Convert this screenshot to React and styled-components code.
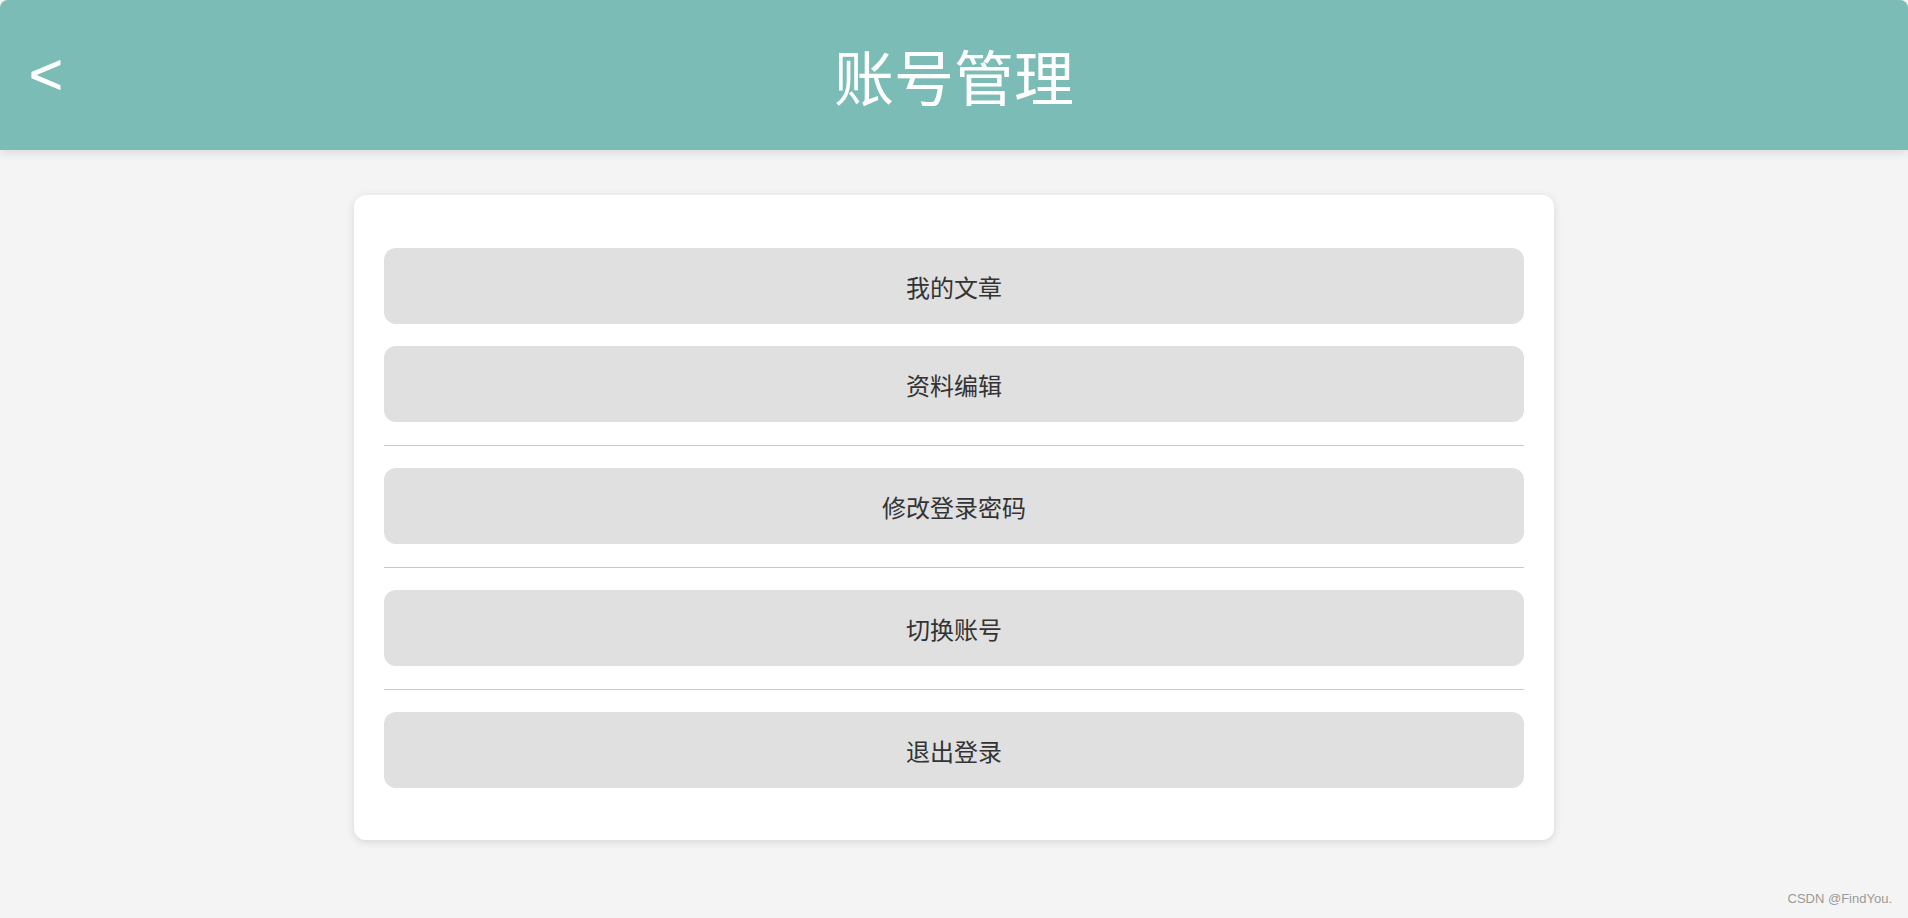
import React from 'react';
import styled, { createGlobalStyle } from 'styled-components';

// --- Datos ---
const groups = [
  ['我的文章', '资料编辑'],
  ['修改登录密码'],
  ['切换账号'],
  ['退出登录'],
];

const GlobalStyle = createGlobalStyle`
  html, body {
    margin: 0;
    padding: 0;
    background: #f4f4f4;
  }
  body {
    font-family: "Liberation Sans", "Noto Sans CJK SC", sans-serif;
  }
`;

const Page = styled.div`
  position: relative;
  min-height: 918px;
  background: #f4f4f4;
  border-radius: 8px;
  overflow: hidden;
`;

const Header = styled.header`
  height: 150px;
  background: #7bbdb6;
  display: grid;
  grid-template-columns: 1fr auto 1fr;
  align-items: center;
  box-shadow: 0 2px 10px rgba(0, 0, 0, 0.12);
  position: relative;
  z-index: 1;
`;

const BackButton = styled.button`
  justify-self: start;
  margin-left: 29px;
  padding: 0;
  border: none;
  background: none;
  color: #fff;
  font-family: "Liberation Sans", sans-serif;
  font-size: 58px;
  line-height: 1;
  cursor: pointer;
  margin-top: -2px;
  -webkit-text-stroke: 0.6px #fff;
`;

const Title = styled.h1`
  margin: 0;
  color: #fff;
  font-family: "Noto Sans CJK SC", sans-serif;
  font-size: 60px;
  font-weight: 400;
  line-height: 1;
  letter-spacing: 0;
`;

const Main = styled.main`
  display: flex;
  justify-content: center;
  padding-top: 45px;
`;

const Card = styled.section`
  width: 1200px;
  box-sizing: border-box;
  background: #fff;
  border-radius: 12px;
  padding: 53px 30px 52px;
  display: flex;
  flex-direction: column;
  gap: 22px;
  box-shadow: 0 2px 8px rgba(0, 0, 0, 0.12);
`;

const ItemButton = styled.button`
  height: 76px;
  width: 100%;
  border: none;
  border-radius: 12px;
  background: #e0e0e0;
  color: #333;
  font-family: "Noto Sans CJK SC", sans-serif;
  font-size: 24px;
  cursor: pointer;
`;

const Divider = styled.hr`
  margin: 1px 0 0;
  border: none;
  height: 1px;
  background: #c8c8c8;
`;

const Watermark = styled.span`
  position: absolute;
  right: 16px;
  bottom: 12px;
  font-family: "Liberation Sans", sans-serif;
  font-size: 13px;
  color: #9a9a9a;
`;

// --- El Componente ---

function App() {
  return (
    <Page>
      <GlobalStyle />
      <Header>
        <BackButton>&lt;</BackButton>
        <Title>账号管理</Title>
        <span />
      </Header>
      <Main>
        <Card>
          {groups.map((group, i) => (
            <React.Fragment key={i}>
              {i > 0 && <Divider />}
              {group.map((label) => (
                <ItemButton key={label}>{label}</ItemButton>
              ))}
            </React.Fragment>
          ))}
        </Card>
      </Main>
      <Watermark>CSDN @FindYou.</Watermark>
    </Page>
  );
}

export default App;
